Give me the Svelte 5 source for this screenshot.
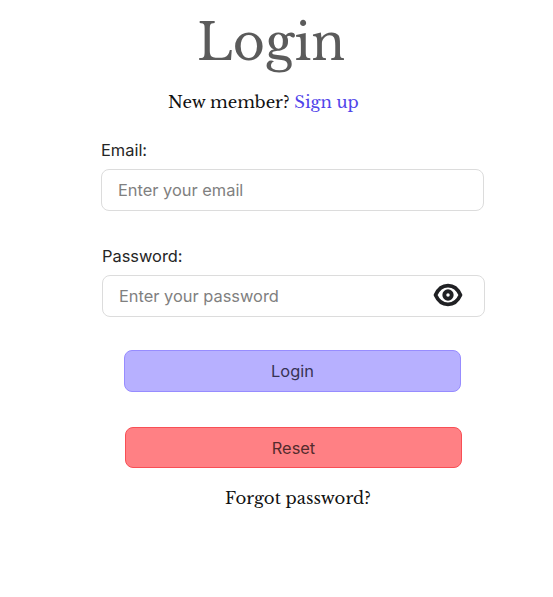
<script>
  let email = $state('');
  let password = $state('');
  let visible = $state(false);

  function reset() {
    email = '';
    password = '';
  }
</script>

<main>
  <h1>Login</h1>
  <p class="member"><span class="new">New member?</span> <a href="#signup">Sign up</a></p>
  <form onsubmit={(e) => e.preventDefault()}>
    <div class="field">
      <label for="email">Email:</label>
      <input id="email" type="text" placeholder="Enter your email" bind:value={email} />
    </div>
    <div class="field second">
      <label for="password">Password:</label>
      <div class="control">
        <input id="password" type={visible ? 'text' : 'password'} placeholder="Enter your password" bind:value={password} />
        <button type="button" class="eye" aria-label="Show password" onclick={() => (visible = !visible)}>
          <svg width="30" height="24" viewBox="0 0 30 24" fill="none" stroke="#202124">
            <path d="M2.500 12C5.100 6.200 9.300 2.600 15 2.600S24.900 6.200 27.500 12C24.900 17.800 20.700 21.400 15 21.400S5.100 17.800 2.500 12Z" stroke-width="3.700" stroke-linejoin="round" />
            <circle cx="15" cy="12" r="3.700" stroke-width="3.900" />
          </svg>
        </button>
      </div>
    </div>
    <button class="action login" type="submit">Login</button>
    <button class="action reset" type="button" onclick={reset}>Reset</button>
  </form>
  <p class="forgot">Forgot password?</p>
</main>

<style>
  :global(body) {
    margin: 0;
    background: #fff;
  }
  main {
    width: 553px;
    height: 597px;
    overflow: hidden;
    display: flex;
    flex-direction: column;
    background: #fff;
    font-family: Inter, sans-serif;
  }
  h1 {
    margin: 11px 0 0 197px;
    height: 64px;
    font: 400 49.2px/64px 'Libre Baskerville', 'Liberation Serif', serif;
    color: #5b5b5b;
    white-space: nowrap;
  }
  .member,
  .forgot {
    font: 400 16.5px/24px 'Libre Baskerville', 'Liberation Serif', serif;
    color: #111;
    white-space: nowrap;
  }
  .member {
    margin: 15px 0 0 168px;
  }
  .member a {
    color: #5145ea;
    text-decoration: none;
  }
  form {
    margin: 26px 0 0 101px;
    display: flex;
    flex-direction: column;
  }
  .field {
    width: 383px;
  }
  .second {
    margin: 35px 0 0 1px;
  }
  label {
    display: block;
    height: 19px;
    font-size: 16.4px;
    line-height: 20px;
    color: #252525;
  }
  input {
    display: block;
    box-sizing: border-box;
    width: 383px;
    height: 42px;
    padding: 0 16px;
    border: 1px solid #dcdcdc;
    border-radius: 8px;
    outline: none;
    background: #fff;
    font: 400 16.4px Inter, sans-serif;
    color: #252525;
  }
  label + input,
  label + .control {
    margin-top: 10px;
  }
  input::placeholder {
    color: #808080;
    opacity: 1;
  }
  .control {
    position: relative;
  }
  .eye {
    position: absolute;
    right: 22px;
    top: 8px;
    width: 30px;
    height: 24px;
    padding: 0;
    border: 0;
    background: none;
  }
  .eye svg {
    display: block;
  }
  .action {
    box-sizing: border-box;
    width: 337px;
    height: 42px;
    padding: 0;
    border-radius: 8px;
    font: 400 16.4px Inter, sans-serif;
  }
  .login {
    margin: 33px 0 0 23px;
    border: 1px solid #978cff;
    background: #b7b0ff;
    color: #373354;
  }
  .reset {
    margin: 35px 0 0 24px;
    height: 41px;
    border: 1px solid #f84f55;
    background: #ff8084;
    color: #542b2d;
  }
  .forgot {
    margin: 18px 0 0 225px;
  }
</style>
